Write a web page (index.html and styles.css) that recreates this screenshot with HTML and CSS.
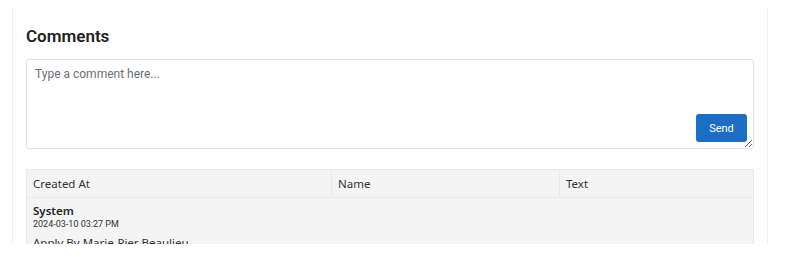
FILE: index.html
```html
<!DOCTYPE html>
<html lang="en">

<head>
    <meta charset="UTF-8">
    <meta name="viewport" content="width=device-width, initial-scale=1.0">
    <title>Comments</title>
    <link rel="stylesheet" href="styles.css">
</head>

<body>
    <div class="page">
        <div class="panel">
            <h2 class="title">Comments</h2>
            <div class="composer">
                <textarea class="composer-input" placeholder="Type a comment here..."></textarea>
                <button class="send-btn" type="button">Send</button>
            </div>
            <table class="comments">
                <thead>
                    <tr>
                        <th class="col-date">Created At</th>
                        <th class="col-name">Name</th>
                        <th>Text</th>
                    </tr>
                </thead>
                <tbody>
                    <tr>
                        <td colspan="3">
                            <div class="author">System</div>
                            <div class="stamp">2024-03-10 03:27 PM</div>
                            <div class="body">Apply By Marie-Pier Beaulieu</div>
                        </td>
                    </tr>
                </tbody>
            </table>
        </div>
    </div>
</body>

</html>
```

FILE: styles.css
```css
html,
body {
    margin: 0;
    padding: 0;
    background: #fff;
}

.page {
    padding: 7px 0 0 12px;
}

.panel {
    width: 728px;
    height: 237px;
    padding: 0 13px;
    border-left: 1px solid #edf0f7;
    border-right: 1px solid #edf0f7;
    overflow: hidden;
    font-family: Roboto, "Liberation Sans", sans-serif;
    color: #212529;
}

.title {
    margin: 0;
    padding-top: 19px;
    height: 33px;
    font-size: 17px;
    font-weight: 600;
    line-height: 20px;
    color: #222;
}

.composer {
    position: relative;
    height: 90px;
}

.composer-input {
    display: block;
    box-sizing: border-box;
    width: 100%;
    height: 90px;
    margin: 0;
    padding: 6px 8px;
    border: 1px solid #e3e3e3;
    border-radius: 3px;
    font-family: Roboto, "Liberation Sans", sans-serif;
    font-size: 12px;
    line-height: 16px;
    resize: vertical;
    outline: none;
}

.composer-input::placeholder {
    color: #6b6f75;
}

.send-btn {
    position: absolute;
    right: 7px;
    bottom: 7px;
    width: 51px;
    height: 28px;
    padding: 0;
    border: none;
    border-radius: 3px;
    background: #1b6ec6;
    color: #fff;
    font-family: Roboto, "Liberation Sans", sans-serif;
    font-size: 11px;
}

.comments {
    width: 100%;
    margin-top: 20px;
    border-collapse: collapse;
    background: #f4f4f4;
    font-family: "Noto Sans", "Open Sans", sans-serif;
    font-size: 11.5px;
    color: #333;
}

.comments th {
    height: 27px;
    padding: 0 6px;
    border: 1px solid #e9e9e9;
    font-weight: 400;
    text-align: left;
}

.comments .col-date {
    width: 292px;
}

.comments .col-name {
    width: 215px;
}

.comments td {
    padding: 5px 6px;
    border: 1px solid #e9e9e9;
    vertical-align: top;
}

.author {
    font-weight: 600;
    font-size: 11.5px;
    line-height: 15px;
    color: #222;
}

.stamp {
    font-family: Roboto, "Liberation Sans", sans-serif;
    font-size: 9px;
    line-height: 12px;
    color: #333;
}

.body {
    margin-top: 6px;
    font-size: 11.5px;
    line-height: 14px;
}
```
